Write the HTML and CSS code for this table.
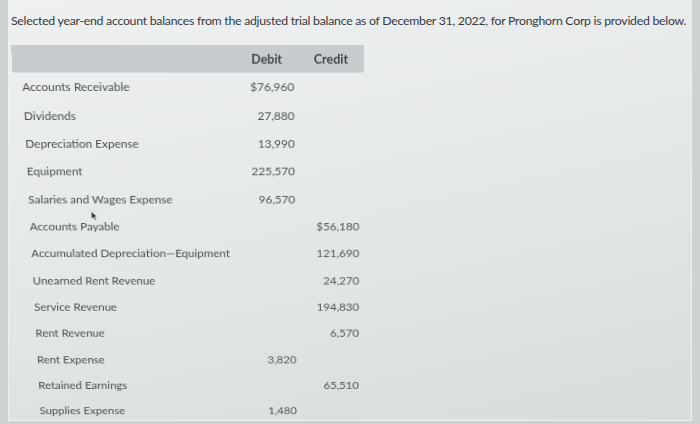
FILE: index.html
```html
<!DOCTYPE html>
<html>
<head>
<meta charset="utf-8">
<link rel="stylesheet" href="styles.css">
</head>
<body>
<div class="panel">
  <p class="title">Selected year-end account balances from the adjusted trial balance as of December 31, 2022, for Pronghorn Corp is provided below.</p>
  <div class="table">
    <div class="head"><span></span><span class="hd">Debit</span><span class="hd">Credit</span></div>
    <div class="row"><span class="lbl">Accounts Receivable</span><span class="num">$76,960</span><span class="num"></span></div>
    <div class="row"><span class="lbl">Dividends</span><span class="num">27,880</span><span class="num"></span></div>
    <div class="row"><span class="lbl">Depreciation Expense</span><span class="num">13,990</span><span class="num"></span></div>
    <div class="row"><span class="lbl">Equipment</span><span class="num">225,570</span><span class="num"></span></div>
    <div class="row"><span class="lbl">Salaries and Wages Expense</span><span class="num">96,570</span><span class="num"></span></div>
    <div class="row"><span class="lbl lbl-cursor">Accounts Payable<svg class="cursor" width="8" height="11" viewBox="0 0 8 11"><path d="M1 0.5 L1 9 L3 7 L4.6 10.5 L6 9.8 L4.5 6.5 L7.2 6.5 Z" fill="#2f3336" stroke="#ffffff" stroke-width="0.6"/></svg></span><span class="num"></span><span class="num">$56,180</span></div>
    <div class="row"><span class="lbl">Accumulated Depreciation—Equipment</span><span class="num"></span><span class="num">121,690</span></div>
    <div class="row"><span class="lbl">Unearned Rent Revenue</span><span class="num"></span><span class="num">24,270</span></div>
    <div class="row"><span class="lbl">Service Revenue</span><span class="num"></span><span class="num">194,830</span></div>
    <div class="row"><span class="lbl">Rent Revenue</span><span class="num"></span><span class="num">6,570</span></div>
    <div class="row"><span class="lbl">Rent Expense</span><span class="num">3,820</span><span class="num"></span></div>
    <div class="row"><span class="lbl">Retained Earnings</span><span class="num"></span><span class="num">65,510</span></div>
    <div class="row"><span class="lbl">Supplies Expense</span><span class="num">1,480</span><span class="num"></span></div>
  </div>
</div>
</body>
</html>
```
FILE: styles.css
```css
html, body {
  margin: 0;
  padding: 0;
}
body {
  width: 700px;
  height: 424px;
  overflow: hidden;
  background: #cfd2d2;
  font-family: Lato, "Open Sans", sans-serif;
}
.panel {
  box-sizing: border-box;
  margin: 0 8px 0 8px;
  height: 421px;
  border: 1px solid #eef0f0;
  border-top: none;
  background: linear-gradient(168deg, #eef0f1 0%, #e6e9ea 45%, #d9dcdc 100%);
  padding: 0 0 0 2px;
  overflow: hidden;
}
.title {
  margin: 0;
  padding-top: 12px;
  height: 45px;
  box-sizing: border-box;
  font-size: 12.3px;
  line-height: 18px;
  color: #363a3e;
  white-space: nowrap;
  letter-spacing: -0.27px;
}
.table {
  width: 353px;
  transform-origin: 330px 0;
  transform: perspective(1000px) rotateX(-9.5deg);
}
.head, .row {
  display: grid;
  grid-template-columns: 224px 63px 66px;
  align-items: center;
}
.head {
  height: 28px;
  background: #c8cccf;
}
.hd {
  text-align: center;
  font-size: 12.5px;
  font-weight: 700;
  color: #40464a;
}
.row {
  height: 29.35px;
}
.lbl {
  padding-left: 9px;
  font-size: 12px;
  color: #4a4f53;
  white-space: nowrap;
}
.lbl-cursor {
  position: relative;
}
.cursor {
  position: absolute;
  left: 72px;
  top: -9px;
}
.num {
  text-align: right;
  padding-right: 4px;
  font-size: 12px;
  color: #51565a;
}
```
